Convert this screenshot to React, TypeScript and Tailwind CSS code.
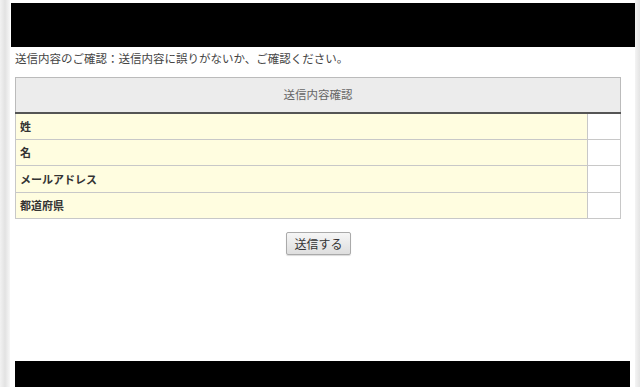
import React from "react";

const rows = ["姓", "名", "メールアドレス", "都道府県"];

export default function App() {
  return (
    <div
      className="flex h-[387px] w-[640px] overflow-hidden bg-white text-[#333]"
      style={{ fontFamily: '"Noto Sans CJK JP", "Noto Sans", sans-serif' }}
    >
      <div className="w-[10px] shrink-0 bg-gradient-to-r from-[#f2f2f2] via-[#e2e2e2] to-[#f7f7f7]" />
      <div className="flex w-[625px] shrink-0 flex-col">
        <div className="mt-[3px] ml-px h-[44px] bg-black" />
        <p className="mt-[2px] pl-[5px] text-[11.5px] leading-[18px] text-[#444]">
          送信内容のご確認：送信内容に誤りがないか、ご確認ください。
        </p>
        <div className="mt-[10px] ml-[5px] w-[606px]">
          <table className="w-full border-collapse text-[11px]">
            <thead>
              <tr>
                <th
                  colSpan={2}
                  className="h-[35px] border border-b-2 border-[#bbb] border-b-[#555] bg-[#ececec] text-[11.5px] font-normal text-[#666]"
                >
                  送信内容確認
                </th>
              </tr>
            </thead>
            <tbody>
              {rows.map((r) => (
                <tr key={r}>
                  <td className="h-[26.5px] border border-[#c8c8c8] bg-[#fffde0] pl-[4px] font-bold text-[#333]">
                    {r}
                  </td>
                  <td className="w-[33px] border border-[#c8c8c8] bg-white" />
                </tr>
              ))}
            </tbody>
          </table>
        </div>
        <div className="mt-[13px] flex justify-center pr-[8px]">
          <button className="h-[23px] rounded-[2px] border border-[#aaa] bg-gradient-to-b from-[#f6f6f6] to-[#dedede] px-[7px] text-[12px] text-[#333] shadow-[0_1px_1px_rgba(0,0,0,0.15)]">
            送信する
          </button>
        </div>
        <div className="flex-1" />
        <div className="mx-[5px] h-[26px] bg-black" />
      </div>
      <div className="flex-1 bg-gradient-to-r from-[#f4f4f4] to-[#e4e4e4]" />
    </div>
  );
}
